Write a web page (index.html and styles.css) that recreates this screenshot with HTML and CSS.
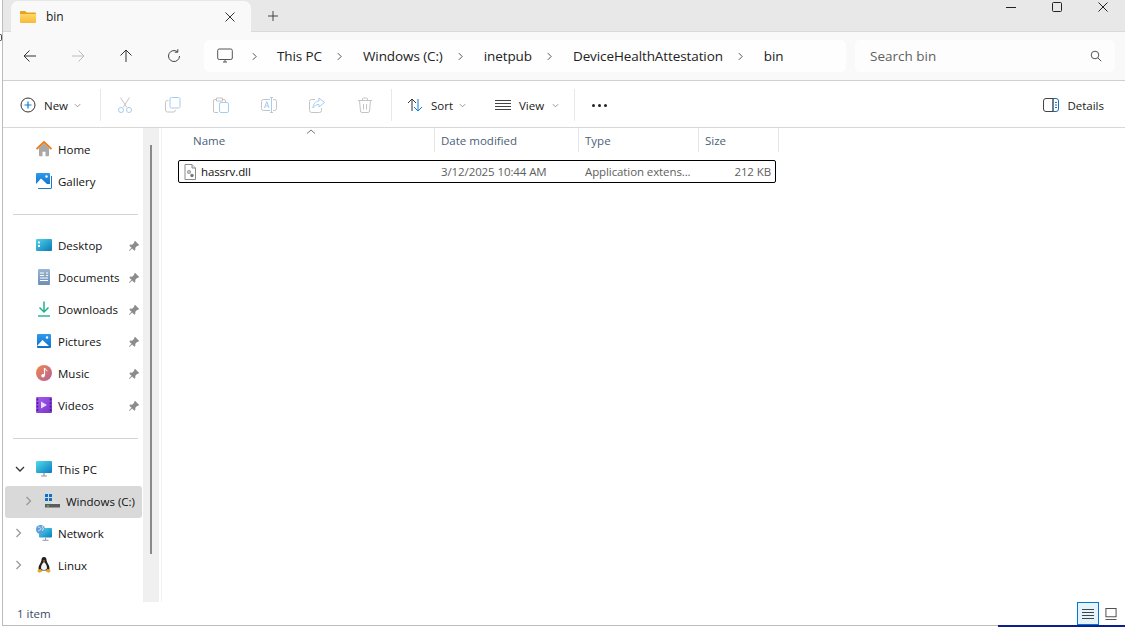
FILE: index.html
```html
<!DOCTYPE html>
<html lang="en">
<head>
<meta charset="utf-8">
<title>bin - File Explorer</title>
<link rel="stylesheet" href="styles.css">
</head>
<body>
<i class="clipmark"></i>
<div class="window">
  <header class="tabstrip">
    <div class="tab">
      <svg class="ic16" viewBox="0 0 16 16"><defs><linearGradient id="fo" x1="0" y1="0" x2="0" y2="1"><stop offset="0" stop-color="#ffd767"/><stop offset="1" stop-color="#f6b93b"/></linearGradient></defs><path d="M0 3.200C0 2.500.5 2 1.200 2h4l1.600 1.600h8c.7 0 1.200.5 1.200 1.200v1H0z" fill="#eba21b"/><path d="M0 5h16v7.800c0 .7-.5 1.200-1.200 1.200H1.200C.5 14 0 13.500 0 12.800z" fill="url(#fo)"/></svg>
      <span class="tab-title">bin</span>
      <svg class="tab-x" viewBox="0 0 10 10"><path d="M.5.5l9 9M9.500.5l-9 9" stroke="#333" stroke-width="1" fill="none"/></svg>
    </div>
    <svg class="tab-add" viewBox="0 0 12 12"><path d="M6 1v10M1 6h10" stroke="#444" stroke-width="1" fill="none"/></svg>
    <div class="winctl">
      <svg viewBox="0 0 12 12"><path d="M1 6.500h10" stroke="#222" fill="none"/></svg>
      <svg viewBox="0 0 12 12"><rect x="1.500" y="1.500" width="9" height="9" rx="1" stroke="#222" fill="none"/></svg>
      <svg viewBox="0 0 12 12"><path d="M1.500 1.500l9 9M10.500 1.500l-9 9" stroke="#222" fill="none"/></svg>
    </div>
  </header>

  <nav class="addressbar">
    <div class="navbtns">
      <svg viewBox="0 0 16 16"><path d="M14 8H2M7.500 2.500L2 8l5.500 5.500" stroke="#333" fill="none"/></svg>
      <svg viewBox="0 0 16 16"><path d="M2 8h12M8.500 2.500L14 8l-5.500 5.500" stroke="#bdbdbd" fill="none"/></svg>
      <svg viewBox="0 0 16 16"><path d="M8 14V2M2.500 7.500L8 2l5.500 5.500" stroke="#333" fill="none"/></svg>
      <svg viewBox="0 0 16 16"><path d="M13.500 8A5.500 5.500 0 1 1 11.500 3.800M11.800 1.200v3h-3" stroke="#444" fill="none"/></svg>
    </div>
    <div class="crumbs">
      <svg class="pc" viewBox="0 0 16 16"><rect x=".7" y="1" width="14.600" height="10.500" rx="1.500" stroke="#555" fill="none"/><path d="M6 14h4M8 11.500V14" stroke="#555" fill="none"/></svg>
      <svg class="chev c1" viewBox="0 0 6 10"><path d="M1 1l4 4-4 4" stroke="#333" fill="none"/></svg>
      <span>This PC</span>
      <svg class="chev" viewBox="0 0 6 10"><path d="M1 1l4 4-4 4" stroke="#333" fill="none"/></svg>
      <span>Windows (C:)</span>
      <svg class="chev" viewBox="0 0 6 10"><path d="M1 1l4 4-4 4" stroke="#333" fill="none"/></svg>
      <span>inetpub</span>
      <svg class="chev" viewBox="0 0 6 10"><path d="M1 1l4 4-4 4" stroke="#333" fill="none"/></svg>
      <span>DeviceHealthAttestation</span>
      <svg class="chev" viewBox="0 0 6 10"><path d="M1 1l4 4-4 4" stroke="#333" fill="none"/></svg>
      <span>bin</span>
    </div>
    <div class="search">
      <span>Search bin</span>
      <svg viewBox="0 0 12 12"><circle cx="5" cy="5" r="3.800" stroke="#555" fill="none"/><path d="M7.800 7.800l3.400 3.400" stroke="#555" fill="none"/></svg>
    </div>
  </nav>

  <div class="cmdbar">
    <div class="cmd new">
      <svg class="ic16" viewBox="0 0 16 16"><circle cx="8" cy="8" r="7" stroke="#333" fill="none"/><path d="M8 4.500v7M4.500 8h7" stroke="#0a7fd8" stroke-width="1.200" fill="none"/></svg>
      <span>New</span>
      <svg class="caret" viewBox="0 0 8 5"><path d="M1 1l3 3 3-3" stroke="#888" fill="none"/></svg>
    </div>
    <i class="vsep"></i>
    <div class="iconbtn"><svg class="ic16" viewBox="0 0 16 16"><path d="M3.500 .5L10 10.500M12.500 .5L6 10.500" stroke="#c4c4c4" fill="none"/><circle cx="4" cy="13" r="2.500" stroke="#a5cdf0" fill="none"/><circle cx="12" cy="13" r="2.500" stroke="#a5cdf0" fill="none"/></svg></div>
    <div class="iconbtn"><svg class="ic16" viewBox="0 0 16 16"><path d="M3.500 3.500H2.500a2 2 0 0 0-2 2v7.500a2 2 0 0 0 2 2h6a2 2 0 0 0 2-2" stroke="#c4c4c4" fill="none"/><rect x="5" y=".5" width="10" height="10.500" rx="1.500" stroke="#a5cdf0" fill="none"/></svg></div>
    <div class="iconbtn"><svg class="ic16" viewBox="0 0 16 16"><path d="M3 2.500H2a1.500 1.500 0 0 0-1.500 1.500v10A1.500 1.500 0 0 0 2 15.500h3M10 2.500h1a1.500 1.500 0 0 1 1.500 1.500v1M3.500 1h6v3h-6z" stroke="#c4c4c4" fill="none"/><rect x="6.500" y="5.500" width="9" height="10" rx="1.500" stroke="#a5cdf0" fill="none"/></svg></div>
    <div class="iconbtn"><svg class="ic16" viewBox="0 0 16 16"><rect x=".5" y="2.500" width="15" height="11" rx="2" stroke="#c4c4c4" fill="none"/><rect x="9" y="0" width="3" height="16" fill="#fff"/><path d="M10.500 0v16M9 .5h3M9 15.500h3" stroke="#a5cdf0" fill="none"/><path d="M3.500 11l2.300-6.500L8 11M4.300 9h3" stroke="#a5cdf0" fill="none"/></svg></div>
    <div class="iconbtn"><svg class="ic16" viewBox="0 0 16 16"><path d="M6 2.500H2.500a2 2 0 0 0-2 2v9a2 2 0 0 0 2 2h8a2 2 0 0 0 2-2V11" stroke="#c4c4c4" fill="none"/><path d="M10 1l5.500 4.500L10 10V7.500C7 7.500 5 9 4 11c0-4 2-6.500 6-7z" stroke="#a5cdf0" fill="none"/></svg></div>
    <div class="iconbtn"><svg class="ic16" viewBox="0 0 16 16"><path d="M1 3.500h14M5.500 3.500V2a1 1 0 0 1 1-1h3a1 1 0 0 1 1 1v1.500M2.500 3.500l1 10.500a1.500 1.500 0 0 0 1.500 1.500h6a1.500 1.500 0 0 0 1.500-1.500l1-10.500M6.500 7v5.500M9.500 7v5.500" stroke="#c4c4c4" fill="none"/></svg></div>
    <i class="vsep s2"></i>
    <div class="cmd sort">
      <svg class="ic16" viewBox="0 0 16 16"><path d="M5 14V2M1 6l4-4 4 4" stroke="#333" fill="none"/><path d="M11 2v12M7 10l4 4 4-4" stroke="#0a7fd8" fill="none"/></svg>
      <span>Sort</span>
      <svg class="caret" viewBox="0 0 8 5"><path d="M1 1l3 3 3-3" stroke="#888" fill="none"/></svg>
    </div>
    <div class="cmd view">
      <svg class="ic16" viewBox="0 0 16 16"><path d="M0 3.500h16M0 6.500h16M0 9.500h16M0 12.500h16" stroke="#444" fill="none"/></svg>
      <span>View</span>
      <svg class="caret" viewBox="0 0 8 5"><path d="M1 1l3 3 3-3" stroke="#888" fill="none"/></svg>
    </div>
    <i class="vsep s3"></i>
    <div class="dots"><i></i><i></i><i></i></div>
    <div class="details">
      <svg class="ic16" viewBox="0 0 16 14"><path d="M10 .5h3A2.500 2.500 0 0 1 15.500 3v8a2.500 2.500 0 0 1-2.500 2.500h-3z" stroke="#1a6fb5" fill="none"/><path d="M.5 3v8a2.500 2.500 0 0 0 2.500 2.500h7V.5H3A2.500 2.500 0 0 0 .5 3z" stroke="#444" fill="none"/><path d="M12 4.500h2M12 7h2M12 9.500h2" stroke="#1a6fb5" fill="none"/></svg>
      <span>Details</span>
    </div>
  </div>

  <div class="body">
    <aside class="sidebar">
      <ul class="tree">
        <li class="row">
          <svg class="ic16" viewBox="0 0 16 16"><path d="M3 7v7.500c0 .5.300.8.800.8h2.700v-4.500h3v4.500h2.700c.5 0 .8-.3.800-.8V7L8 2.500z" fill="#a8a8a8"/><path d="M.5 8L8 1l7.500 7" stroke="#ea7a17" stroke-width="1.800" fill="none"/></svg>
          <span>Home</span>
        </li>
        <li class="row">
          <svg class="ic16" viewBox="0 0 16 16"><defs><linearGradient id="gl" x1="0" y1="0" x2="0" y2="1"><stop offset="0" stop-color="#2e9bef"/><stop offset="1" stop-color="#0e6fc8"/></linearGradient></defs><rect x="0" y="0" width="14" height="13" rx="1" fill="url(#gl)"/><path d="M0 11l5-5.500L11 11l3 0v2H0z" fill="#fff"/><circle cx="10.500" cy="3.500" r="1.200" fill="#fff"/><path d="M2 15.500h13c.3 0 .5-.2.500-.5V3" stroke="#1f79c9" fill="none"/></svg>
          <span>Gallery</span>
        </li>
        <li class="sep"></li>
        <li class="row">
          <svg class="ic16" viewBox="0 0 16 16"><defs><linearGradient id="de" x1="0" y1="0" x2="1" y2="1"><stop offset="0" stop-color="#4fd3e8"/><stop offset="1" stop-color="#0a79b8"/></linearGradient></defs><rect x="0" y="2" width="16" height="12" rx="1" fill="url(#de)"/><rect x="2" y="4.500" width="2" height="2" fill="#fff"/><rect x="2" y="8" width="2" height="2" fill="#fff"/></svg>
          <span class="lbl">Desktop</span>
          <svg class="pin" viewBox="0 0 12 12"><path d="M7 .8l4.200 4.200-1.400 1-.6-.3-2 2.200.2 1.800-1 1L4.200 8.500 1.500 11l-.5-.5L3.500 7.800 1.300 5.600l1-1 1.800.2 2.200-2-.3-.6z" fill="#8b8b8b"/></svg>
        </li>
        <li class="row">
          <svg class="ic16" viewBox="0 0 16 16"><defs><linearGradient id="dc" x1="0" y1="0" x2="0" y2="1"><stop offset="0" stop-color="#9cb5d2"/><stop offset="1" stop-color="#6d8fb8"/></linearGradient></defs><rect x="2" y="0" width="12" height="16" rx="1" fill="url(#dc)"/><path d="M4 4h4M4 6.500h4M10 4h2M10 6.500h2M4 9h8M4 11.500h8" stroke="#fff" fill="none"/></svg>
          <span class="lbl">Documents</span>
          <svg class="pin" viewBox="0 0 12 12"><path d="M7 .8l4.200 4.200-1.400 1-.6-.3-2 2.200.2 1.800-1 1L4.200 8.500 1.500 11l-.5-.5L3.500 7.800 1.300 5.600l1-1 1.800.2 2.200-2-.3-.6z" fill="#8b8b8b"/></svg>
        </li>
        <li class="row">
          <svg class="ic16" viewBox="0 0 16 16"><path d="M8 .5v10M3.500 6.500L8 11l4.500-4.500" stroke="#1fb28c" stroke-width="1.500" fill="none"/><path d="M2 15h12" stroke="#1fb28c" stroke-width="1.400" fill="none"/></svg>
          <span class="lbl">Downloads</span>
          <svg class="pin" viewBox="0 0 12 12"><path d="M7 .8l4.200 4.200-1.400 1-.6-.3-2 2.200.2 1.800-1 1L4.200 8.500 1.500 11l-.5-.5L3.500 7.800 1.300 5.600l1-1 1.800.2 2.200-2-.3-.6z" fill="#8b8b8b"/></svg>
        </li>
        <li class="row">
          <svg class="ic16" viewBox="0 0 16 16"><defs><linearGradient id="pi" x1="0" y1="0" x2="0" y2="1"><stop offset="0" stop-color="#2e9bef"/><stop offset="1" stop-color="#0e6fc8"/></linearGradient></defs><rect x="1" y="1" width="14" height="14" rx="1" fill="url(#pi)"/><path d="M1 13l5.500-6L13 13z" fill="#fff"/><circle cx="11" cy="4.500" r="1.200" fill="#fff"/></svg>
          <span class="lbl">Pictures</span>
          <svg class="pin" viewBox="0 0 12 12"><path d="M7 .8l4.200 4.200-1.400 1-.6-.3-2 2.200.2 1.800-1 1L4.200 8.500 1.500 11l-.5-.5L3.500 7.800 1.300 5.600l1-1 1.800.2 2.200-2-.3-.6z" fill="#8b8b8b"/></svg>
        </li>
        <li class="row">
          <svg class="ic16" viewBox="0 0 16 16"><defs><linearGradient id="mu" x1="0" y1="0" x2="1" y2="1"><stop offset="0" stop-color="#f0884a"/><stop offset="1" stop-color="#b3609c"/></linearGradient></defs><circle cx="8" cy="8" r="8" fill="url(#mu)"/><path d="M8.500 3v7.500" stroke="#fff" stroke-width="1.200" fill="none"/><circle cx="7" cy="10.800" r="1.800" fill="#fff"/><path d="M8.500 3c.3 1.500 2.500 1.500 2.500 3.200" stroke="#fff" fill="none"/></svg>
          <span class="lbl">Music</span>
          <svg class="pin" viewBox="0 0 12 12"><path d="M7 .8l4.200 4.200-1.400 1-.6-.3-2 2.200.2 1.800-1 1L4.200 8.500 1.500 11l-.5-.5L3.500 7.800 1.300 5.600l1-1 1.800.2 2.200-2-.3-.6z" fill="#8b8b8b"/></svg>
        </li>
        <li class="row">
          <svg class="ic16" viewBox="0 0 16 16"><defs><linearGradient id="vi" x1="0" y1="0" x2="1" y2="1"><stop offset="0" stop-color="#a45cf0"/><stop offset="1" stop-color="#7a34c8"/></linearGradient></defs><rect x="0" y="0" width="16" height="16" rx="1" fill="url(#vi)"/><path d="M1.500 1.500v13M14.500 1.500v13" stroke="#4a1f8c" stroke-width="1.500" stroke-dasharray="2 1.500" fill="none"/><path d="M5 4.500v7l6-3.500z" fill="#e8d8ff"/></svg>
          <span class="lbl">Videos</span>
          <svg class="pin" viewBox="0 0 12 12"><path d="M7 .8l4.200 4.200-1.400 1-.6-.3-2 2.200.2 1.800-1 1L4.200 8.500 1.500 11l-.5-.5L3.500 7.800 1.300 5.600l1-1 1.800.2 2.200-2-.3-.6z" fill="#8b8b8b"/></svg>
        </li>
        <li class="sep s2"></li>
        <li class="row">
          <svg class="tw down" viewBox="0 0 10 6"><path d="M1 1l4 4 4-4" stroke="#333" stroke-width="1.300" fill="none"/></svg>
          <svg class="ic16" viewBox="0 0 16 16"><defs><linearGradient id="tp" x1="0" y1="0" x2="1" y2="1"><stop offset="0" stop-color="#50dcec"/><stop offset="1" stop-color="#0a7bc0"/></linearGradient></defs><rect x="0" y="0" width="16" height="12" rx="1" fill="url(#tp)"/><path d="M8 12v2.500M5 15h6" stroke="#8a9aa6" stroke-width="1.200" fill="none"/></svg>
          <span>This PC</span>
        </li>
        <li class="row active">
          <svg class="tw" viewBox="0 0 6 10"><path d="M1 1l4 4-4 4" stroke="#999" stroke-width="1.300" fill="none"/></svg>
          <svg class="ic16" viewBox="0 0 16 16"><path d="M1 1h3v3H1zM5 1h3v3H5zM1 5h3v3H1zM5 5h3v3H5z" fill="#0e6fc8"/><path d="M9 6l7 5v3H1v-3h7z" fill="#e0e0e0"/><rect x="1" y="11" width="15" height="3.500" fill="#5c5c5c"/><rect x="3" y="12.500" width="2" height="1" fill="#5fe06a"/></svg>
          <span>Windows (C:)</span>
        </li>
        <li class="row">
          <svg class="tw" viewBox="0 0 6 10"><path d="M1 1l4 4-4 4" stroke="#999" stroke-width="1.300" fill="none"/></svg>
          <svg class="ic16" viewBox="0 0 16 16"><defs><linearGradient id="nw" x1="0" y1="0" x2="1" y2="1"><stop offset="0" stop-color="#50dcec"/><stop offset="1" stop-color="#0a7bc0"/></linearGradient></defs><rect x="3" y="3" width="13" height="9.500" rx="1" fill="url(#nw)"/><path d="M9.500 12.500V15M6.500 15.300h6" stroke="#8a9aa6" fill="none"/><circle cx="4.500" cy="4.500" r="4.500" fill="#5b9fd8"/><path d="M2 2c2 0 3 1 3 2s-2 1-3 2M6 1l1.500 3L6 6" stroke="#d5e8f5" fill="none"/></svg>
          <span>Network</span>
        </li>
        <li class="row">
          <svg class="tw" viewBox="0 0 6 10"><path d="M1 1l4 4-4 4" stroke="#999" stroke-width="1.300" fill="none"/></svg>
          <svg class="ic16" viewBox="0 0 16 16"><path d="M8 0c2 0 2.600 1.800 2.600 3.500 0 2 2.900 4.500 2.900 7.500 0 1-.4 2-1 2.500H3.500c-.6-.5-1-1.500-1-2.500 0-3 2.900-5.500 2.900-7.500C5.400 1.800 6 0 8 0z" fill="#222"/><path d="M8 5c-1.500 1-3 3.500-3 5.800 0 1 .5 2.200 3 2.200s3-1.200 3-2.200C11 8.500 9.500 6 8 5z" fill="#f4f4f4"/><path d="M2 12.500l3-.5 1 2.500-2.500 1.300L1.500 14.500zM14 12.500l-3-.5-1 2.500 2.500 1.300 2-1.300z" fill="#e6a71e"/><path d="M6.800 3.500h2.400L8 5z" fill="#e6a71e"/></svg>
          <span>Linux</span>
        </li>
      </ul>
    </aside>
    <div class="scrolltrack"><div class="thumb"></div></div>
    <main class="files">
      <div class="sortmark"><svg viewBox="0 0 10 5"><path d="M1 4.500l4-3.500 4 3.500" stroke="#777" fill="none"/></svg></div>
      <div class="colhead">
        <div>Name</div>
        <div>Date modified</div>
        <div>Type</div>
        <div>Size</div>
      </div>
      <div class="filerow">
        <div class="fname">
          <svg class="ic16" viewBox="0 0 16 16"><path d="M3 .5h7l3.500 3.500v11.500H3z" fill="#fff" stroke="#8a8a8a"/><path d="M10 .5V4h3.500" fill="#e8e8e8" stroke="#8a8a8a"/><circle cx="7" cy="8" r="2" fill="#9a9a9a"/><circle cx="10" cy="11.500" r="1.700" fill="#777"/><circle cx="7" cy="8" r=".7" fill="#fff"/></svg>
          <span>hassrv.dll</span>
        </div>
        <div class="muted">3/12/2025 10:44 AM</div>
        <div class="muted">Application extens...</div>
        <div class="muted size">212 KB</div>
      </div>
    </main>
  </div>

  <footer class="statusbar">
    <span>1 item</span>
    <div class="views">
      <div class="vbtn on"><svg viewBox="0 0 14 12"><path d="M1 1.500h12M1 4.500h12M1 7.500h12M1 10.500h12" stroke="#444" fill="none"/></svg></div>
      <div class="vbtn"><svg viewBox="0 0 12 13"><rect x=".5" y=".5" width="11" height="9" stroke="#444" fill="none"/><path d="M0 12.500h12" stroke="#444" fill="none"/></svg></div>
    </div>
  </footer>
</div>
<div class="screenedge"><div class="edge-grey"></div><div class="edge-navy"></div></div>
</body>
</html>
```
FILE: styles.css
```css
* { box-sizing: border-box; }
html, body { margin: 0; padding: 0; }
body {
  width: 1125px;
  height: 627px;
  overflow: hidden;
  background: #fff;
  font-family: "Open Sans", "Noto Sans", sans-serif;
  font-size: 11.500px;
  color: #1a1a1a;
}
svg { display: block; flex: none; }
ul { list-style: none; margin: 0; padding: 0; }
.ic16 { width: 16px; height: 16px; }

.clipmark {
  position: absolute;
  left: 0;
  top: 34px;
  width: 2px;
  height: 7px;
  border: 1px solid #444;
  border-left: 0;
  border-radius: 0 2px 2px 0;
}

.window {
  margin-left: 2px;
  width: 1123px;
  height: 625px;
  border-left: 1px solid #bcbcbc;
  display: flex;
  flex-direction: column;
}

/* tab strip */
.tabstrip {
  height: 32px;
  flex: none;
  background: #e8e8e8;
  border-bottom: 1px solid #d9d9d9;
  display: flex;
  align-items: flex-end;
  padding-left: 8px;
}
.tab {
  width: 240px;
  height: 31px;
  margin-bottom: -1px;
  background: #f9f9f9;
  border-radius: 7px 7px 0 0;
  display: flex;
  align-items: center;
  padding: 0 0 0 9px;
  position: relative;
}
.tab-title { margin-left: 10px; font-size: 12px; }
.tab-x { width: 10px; height: 10px; position: absolute; left: 214px; top: 11px; }
.tab-add { width: 12px; height: 12px; margin: 0 0 9px 16px; }
.winctl {
  margin-left: auto;
  align-self: flex-start;
  display: flex;
  gap: 34px;
  padding: 1px 16px 0 0;
}
.winctl svg { width: 12px; height: 12px; }

/* address row */
.addressbar {
  height: 49px;
  flex: none;
  background: #f9f9f9;
  border-bottom: 1px solid #d0d0d0;
  display: flex;
  align-items: center;
  padding: 0 9px 0 0;
}
.navbtns {
  width: 201px;
  display: flex;
  gap: 32px;
  padding-left: 19px;
  flex: none;
}
.navbtns svg { width: 16px; height: 16px; }
.crumbs {
  width: 642px;
  height: 32px;
  background: #fefefe;
  border-radius: 5px;
  display: flex;
  align-items: center;
  padding-left: 13px;
  font-size: 13.500px;
  letter-spacing: -0.1px;
  color: #222;
}
.crumbs .pc { width: 16px; height: 16px; }
.chev { width: 5px; height: 9px; margin: 0 21px 0 15px; }
.chev.c1 { margin-left: 19px; margin-right: 20px; }
.search {
  width: 260px;
  height: 32px;
  margin-left: 9px;
  background: #fdfdfd;
  border-radius: 5px;
  display: flex;
  align-items: center;
  justify-content: space-between;
  padding: 0 13px 0 15px;
  font-size: 13.500px;
  color: #5f5f5f;
}
.search svg { width: 12px; height: 12px; }

/* command bar */
.cmdbar {
  height: 47px;
  flex: none;
  background: #fff;
  border-bottom: 1px solid #d8d8d8;
  display: flex;
  align-items: center;
  padding: 2px 0 0 17px;
}
.cmd { display: flex; align-items: center; }
.cmd span { margin-left: 8px; }
.caret { width: 7px; height: 5px; margin-left: 6px; }
.view .caret { margin-left: 8px; }
.new { width: 80px; }
.vsep { width: 1px; height: 32px; background: #e8e8e8; flex: none; }
.iconbtn { width: 48px; display: flex; justify-content: center; flex: none; }
.vsep.s2 { margin-left: 2px; }
.sort { margin-left: 15px; width: 88px; }
.view { width: 79px; }
.dots { display: flex; gap: 3px; margin-left: 17px; }
.dots i { width: 3px; height: 3px; border-radius: 50%; background: #222; }
.details { margin-left: auto; padding-right: 21px; display: flex; align-items: center; gap: 8px; }

/* body */
.body { flex: 1; min-height: 0; display: flex; }
.sidebar { width: 140px; flex: none; padding-top: 5px; }
.row {
  height: 32px;
  display: flex;
  align-items: center;
  padding-left: 33px;
  position: relative;
  color: #111;
}
.row > span { margin-left: 6px; font-size: 11.500px; }
.pin { width: 12px; height: 12px; position: absolute; left: 125px; top: 11px; }
.sep { height: 1px; background: #d4d4d4; margin: 17px 5px 14px 10px; }
.tw { position: absolute; left: 12px; top: 11px; width: 7px; height: 10px; }
.tw.down { width: 10px; height: 6px; left: 12px; top: 13px; }
.row.active {
  background: #d9d9d9;
  border-radius: 3px;
  margin: 1px 1px -1px 2px;
  padding: 0 0 2px 39px;
}
.row.active .tw { left: 20px; top: 10px; }
.scrolltrack {
  width: 16px;
  flex: none;
  height: 474px;
  background: #f0f0f0;
  padding: 17px 0 0 7px;
}
.thumb { width: 2px; height: 409px; background: #8a8a8a; }

.files { flex: 1; position: relative; border-left: 1px solid #f2f2f2; margin-left: 2px; }
.sortmark { position: absolute; left: 144px; top: 1px; }
.sortmark svg { width: 10px; height: 5px; }
.colhead {
  display: grid;
  grid-template-columns: 248px 144px 120px 80px;
  height: 26px;
  margin-left: 25px;
  padding-bottom: 2px;
  color: #4c607a;
}
.colhead div {
  display: flex;
  align-items: center;
  padding-left: 6px;
  border-right: 1px solid #e5e5e5;
}
.filerow {
  display: grid;
  grid-template-columns: 256px 144px 120px 73px;
  height: 23px;
  margin: 6px 0 0 16px;
  width: 598px;
  border: 1px solid #000;
  border-radius: 2px;
  align-items: center;
  letter-spacing: -0.1px;
}
.fname { display: flex; align-items: center; padding-left: 3px; color: #111; }
.fname span { margin-left: 3px; }
.filerow .muted { padding-left: 6px; color: #606060; }
.filerow .size { text-align: right; padding-right: 1px; }

/* status bar */
.statusbar {
  height: 23px;
  flex: none;
  display: flex;
  align-items: center;
  justify-content: space-between;
  padding: 0 7px 0 14px;
  color: #3a4a66;
}
.views { display: flex; align-items: center; gap: 4px; }
.vbtn { width: 15px; height: 23px; display: flex; align-items: center; justify-content: center; }
.vbtn.on { width: 22px; background: #e5f3fb; border: 1px solid #0078d4; }
.vbtn svg { width: 14px; height: 12px; }

.screenedge { display: flex; height: 2px; margin-left: 2px; }
.edge-grey { width: 996px; height: 1px; background: #bcbcbc; }
.edge-navy { flex: 1; background: #0c1f8c; }
```
